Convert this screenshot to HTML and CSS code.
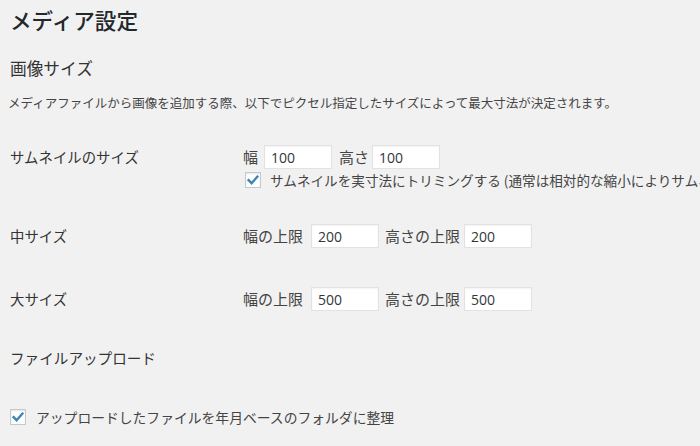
FILE: index.html
```html
<!DOCTYPE html>
<html lang="ja">
<head>
<meta charset="utf-8">
<title>メディア設定</title>
<link rel="stylesheet" href="styles.css">
</head>
<body>
<div class="wrap">
  <h1 class="title">メディア設定</h1>
  <h2 class="section">画像サイズ</h2>
  <p class="desc">メディアファイルから画像を追加する際、以下でピクセル指定したサイズによって最大寸法が決定されます。</p>

  <div class="form-table">
    <div class="row row-thumb">
      <div class="th">サムネイルのサイズ</div>
      <div class="td">
        <div class="fields">
          <span class="lbl">幅</span><input class="num" type="text" value="100"><span class="lbl">高さ</span><input class="num num-h" type="text" value="100">
        </div>
        <label class="check-line">
          <span class="checkbox"><svg viewBox="0 0 16 16" width="16" height="16"><path d="M3.6 8.2 L6.6 11.2 L12.4 4.6" fill="none" stroke="#3a86b8" stroke-width="2.4" stroke-linecap="square" stroke-linejoin="miter"/></svg></span>
          <span class="check-text">サムネイルを実寸法にトリミングする (通常は相対的な縮小によりサムネイルを作成します)</span>
        </label>
      </div>
    </div>
    <div class="row row-medium">
      <div class="th">中サイズ</div>
      <div class="td">
        <div class="fields">
          <span class="lbl">幅の上限</span><input class="num" type="text" value="200"><span class="lbl">高さの上限</span><input class="num num-h" type="text" value="200">
        </div>
      </div>
    </div>
    <div class="row row-large">
      <div class="th">大サイズ</div>
      <div class="td">
        <div class="fields">
          <span class="lbl">幅の上限</span><input class="num" type="text" value="500"><span class="lbl">高さの上限</span><input class="num num-h" type="text" value="500">
        </div>
      </div>
    </div>
  </div>

  <h2 class="section section-upload">ファイルアップロード</h2>
  <label class="check-line upload-line">
    <span class="checkbox"><svg viewBox="0 0 16 16" width="16" height="16"><path d="M3.6 8.2 L6.6 11.2 L12.4 4.6" fill="none" stroke="#3a86b8" stroke-width="2.4" stroke-linecap="square" stroke-linejoin="miter"/></svg></span>
    <span class="check-text">アップロードしたファイルを年月ベースのフォルダに整理</span>
  </label>
</div>
</body>
</html>
```

FILE: styles.css
```css
html, body {
  margin: 0;
  padding: 0;
  background: #f1f1f1;
  overflow: hidden;
}
body {
  width: 700px;
  height: 446px;
  font-family: "Noto Sans CJK JP", "Noto Sans", sans-serif;
  color: #444;
}
.wrap {
  padding: 0 0 0 10px;
}
.title {
  margin: 0;
  padding-top: 6px;
  font-size: 21.6px;
  line-height: 28px;
  font-weight: 500;
  color: #23282d;
}
.section {
  margin: 22px 0 0;
  font-size: 16.7px;
  line-height: 24px;
  font-weight: 400;
  color: #333;
}
.desc {
  margin: 13px 0 0 -2px;
  font-size: 12.5px;
  line-height: 20px;
  color: #444;
  white-space: nowrap;
}
.form-table {
  margin-top: 32px;
  display: flex;
  flex-direction: column;
}
.row {
  display: grid;
  grid-template-columns: 233px 1fr;
}
.row-medium {
  margin-top: 34px;
}
.row-large {
  margin-top: 39px;
}
.th {
  font-size: 14.4px;
  line-height: 24px;
  color: #333;
  white-space: nowrap;
}
.td {
  font-size: 15px;
  white-space: nowrap;
  overflow: hidden;
}
.fields {
  display: flex;
  align-items: center;
  height: 24px;
}
.lbl {
  line-height: 24px;
  color: #444;
}
.num {
  box-sizing: border-box;
  width: 68px;
  height: 24px;
  margin: 0 7px 0 6px;
  padding: 0 6px;
  border: 1px solid #e2e2e2;
  background: #fff;
  box-shadow: inset 0 1px 2px rgba(0, 0, 0, 0.05);
  font-family: "Open Sans", "Noto Sans", sans-serif;
  font-size: 14px;
  color: #32373c;
  outline: none;
}
.row-thumb .num {
  margin: 0 7px 0 6px;
}
.row-thumb .num-h {
  margin-left: 3px;
}
.row-medium .num, .row-large .num {
  margin: 0 6px 0 8px;
}
.row-medium .num-h, .row-large .num-h {
  margin-left: 4px;
}
.check-line {
  display: flex;
  align-items: center;
  height: 20px;
  margin-top: 1px;
}
.row-thumb .check-line {
  padding-left: 2px;
}
.checkbox {
  box-sizing: border-box;
  width: 16px;
  height: 16px;
  flex: none;
  border: 1px solid #c6c9cc;
  background: #fff;
  box-shadow: inset 0 1px 2px rgba(0, 0, 0, 0.1);
  display: flex;
  align-items: center;
  justify-content: center;
}
.checkbox svg {
  display: block;
  margin: -1px;
}
.check-text {
  margin-left: 9px;
  font-size: 13.6px;
  line-height: 20px;
  color: #444;
}
.section-upload {
  margin-top: 35px;
  font-size: 14.6px;
}
.upload-line {
  margin-top: 37px;
}
.upload-line .check-text {
  margin-left: 10px;
  font-size: 13.8px;
}
```
